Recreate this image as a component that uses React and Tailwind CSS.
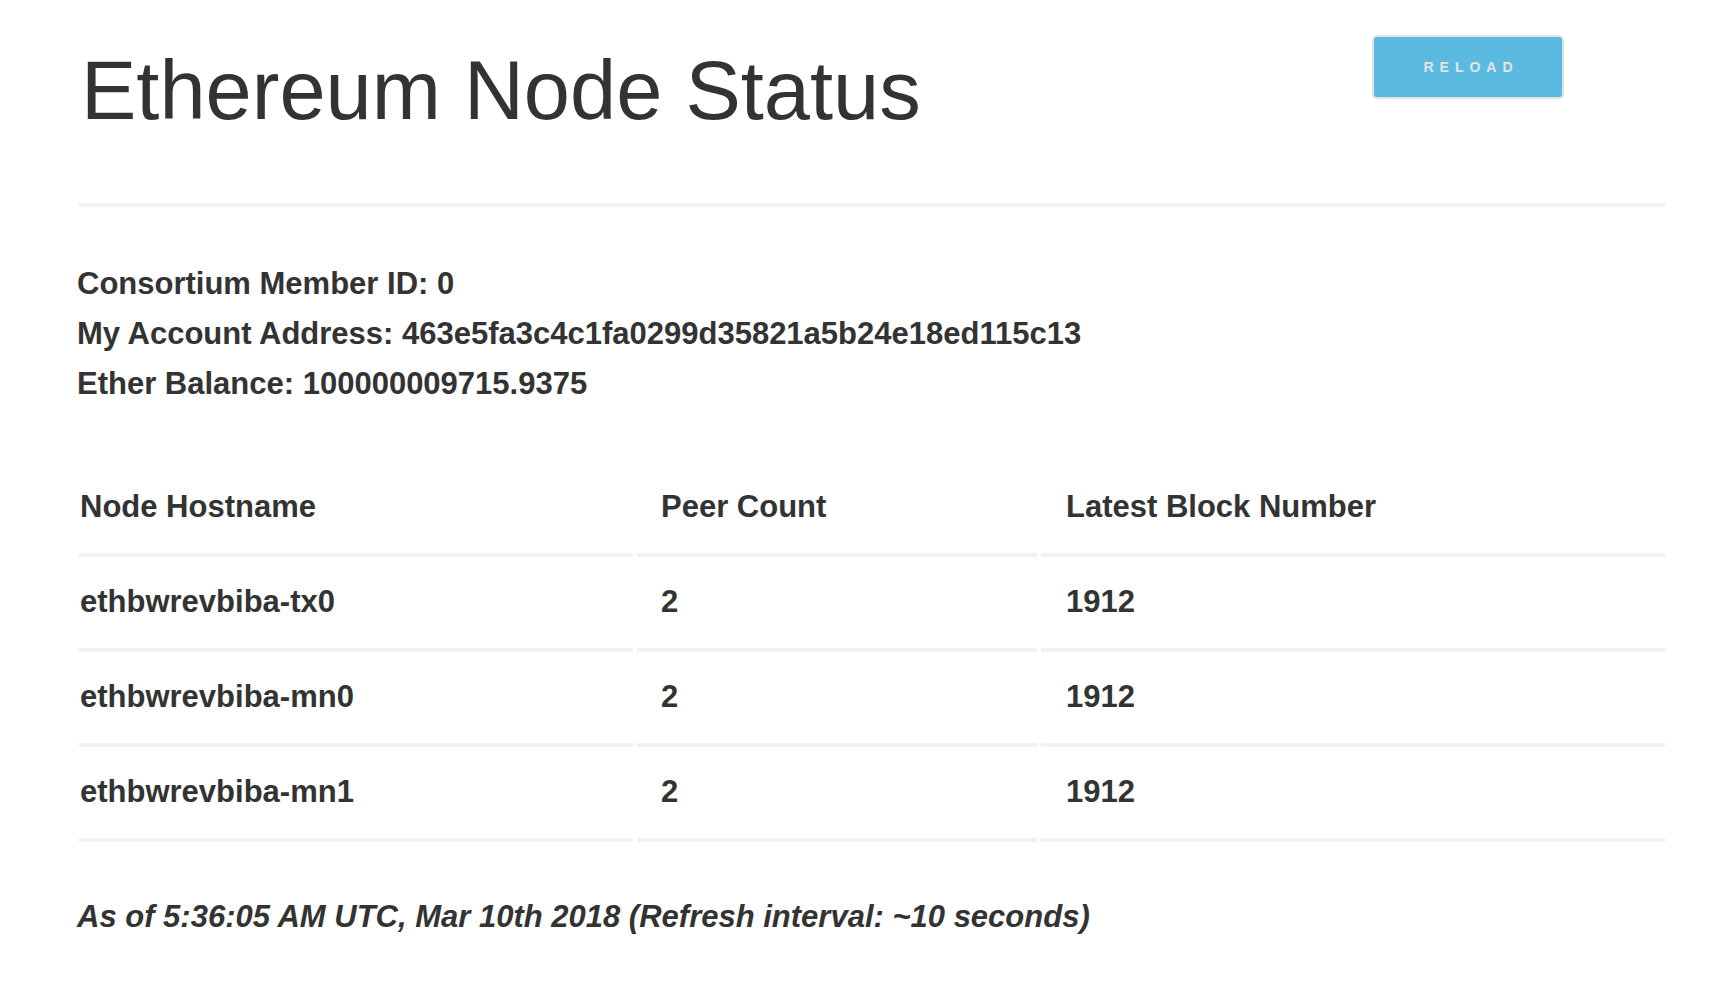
export default function App() {
  const rows = [
    ["ethbwrevbiba-tx0", "2", "1912"],
    ["ethbwrevbiba-mn0", "2", "1912"],
    ["ethbwrevbiba-mn1", "2", "1912"],
  ];
  const cell = "h-[95px] border-b-4 border-[#f1f1f1] flex items-center";
  return (
    <div
      className="min-h-[999px] bg-white text-[#333333]"
      style={{ fontFamily: '"Liberation Sans", Arial, sans-serif' }}
    >
      <div className="ml-[79px] w-[1586px] pt-[35px]">
        <div className="flex items-start justify-between">
          <h1 className="mt-[10px] ml-[2px] text-[83px] leading-[92px] font-normal">
            Ethereum Node Status
          </h1>
          <button className="mr-[101px] w-[192px] h-[64px] rounded-[5px] border-2 border-[#e2e2e2] bg-[#5bbadf] flex items-center justify-center">
            <span className="pl-[6px] text-[14px] font-bold tracking-[6px] text-[#e4e4e4]">
              RELOAD
            </span>
          </button>
        </div>

        <div className="mt-[66px] h-[4px] bg-[#f1f1f1]" />

        <div className="mt-[52px] -ml-[2px] text-[31px] leading-[50px] font-bold">
          <div>Consortium Member ID: 0</div>
          <div>My Account Address: 463e5fa3c4c1fa0299d35821a5b24e18ed115c13</div>
          <div>Ether Balance: 100000009715.9375</div>
        </div>

        <div className="mt-[53px] grid grid-cols-[554px_400px_1fr] gap-x-[4px] text-[31px] font-bold">
          <div className={cell + " pl-[1px]"}>Node Hostname</div>
          <div className={cell + " pl-[24px]"}>Peer Count</div>
          <div className={cell + " pl-[25px]"}>Latest Block Number</div>
          {rows.map((r) => (
            <>
              <div key={r[0] + "a"} className={cell + " pl-[1px]"}>{r[0]}</div>
              <div key={r[0] + "b"} className={cell + " pl-[24px]"}>{r[1]}</div>
              <div key={r[0] + "c"} className={cell + " pl-[25px]"}>{r[2]}</div>
            </>
          ))}
        </div>

        <div className="mt-[50px] -ml-[2px] text-[31px] leading-[50px] font-bold italic">
          As of 5:36:05 AM UTC, Mar 10th 2018 (Refresh interval: ~10 seconds)
        </div>
      </div>
    </div>
  );
}
